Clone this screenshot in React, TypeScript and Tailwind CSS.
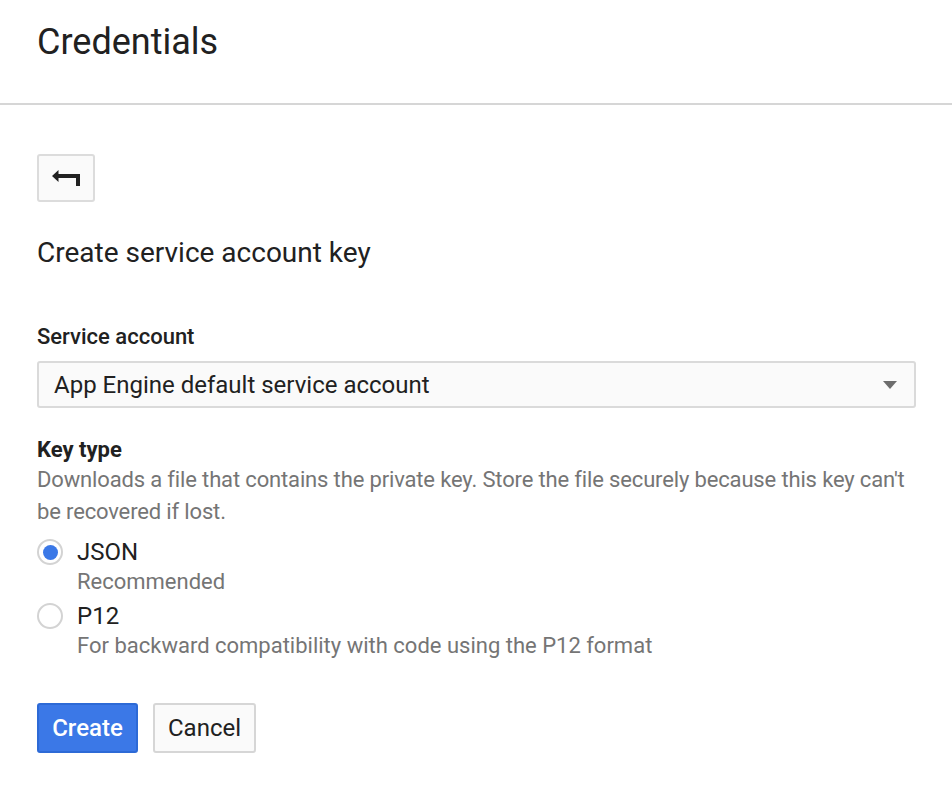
import { useState } from "react";

type KeyType = "json" | "p12";

const keyOptions: { value: KeyType; label: string; hint: string }[] = [
  { value: "json", label: "JSON", hint: "Recommended" },
  { value: "p12", label: "P12", hint: "For backward compatibility with code using the P12 format" },
];

function BackArrow() {
  return (
    <svg width="28" height="16" viewBox="0 0 28 16" fill="#212121" aria-hidden="true">
      <path d="M0 6 L6.5 0 L6.5 4 L28 4 L28 16 L24 16 L24 8 L6.5 8 L6.5 12 Z" />
    </svg>
  );
}

function Radio({ checked }: { checked: boolean }) {
  return (
    <span className="flex h-[26px] w-[26px] shrink-0 items-center justify-center rounded-full border-2 border-[#d3d3d3] bg-white">
      {checked ? <span className="h-[15px] w-[15px] rounded-full bg-[#3b78e7]" /> : null}
    </span>
  );
}

export default function App() {
  const [keyType, setKeyType] = useState<KeyType>("json");

  return (
    <div className="min-h-[796px] bg-white font-['Roboto',sans-serif] text-[#212121]">
      <header className="h-[105px] border-b-2 border-[#d6d6d6] px-[37px] pt-[24px]">
        <h1 className="text-[36px] leading-[36px]">Credentials</h1>
      </header>

      <main className="pl-[37px] pt-[49px]">
        <button
          type="button"
          className="flex h-[48px] w-[58px] items-center justify-center rounded-[3px] border-2 border-[#dcdcdc] bg-[#fafafa]"
          aria-label="Back"
        >
          <BackArrow />
        </button>

        <h2 className="mt-[35px] text-[28px] leading-[32px]">Create service account key</h2>

        <label className="mt-[54px] block text-[22px] font-medium leading-[28px]">
          Service account
        </label>
        <div className="mt-[10px] flex h-[47px] w-[879px] items-center justify-between rounded-[3px] border-2 border-[#dadada] bg-[#fafafa] pl-[15px] pr-[17px]">
          <span className="text-[24px]">App Engine default service account</span>
          <span className="h-0 w-0 border-x-[7px] border-t-[8px] border-x-transparent border-t-[#6d6d6d]" />
        </div>

        <p className="mt-[28px] text-[22px] font-bold leading-[28px]">Key type</p>
        <p className="max-w-[915px] text-[22px] leading-[32px] tracking-[-0.15px] text-[#757575]">
          Downloads a file that contains the private key. Store the file securely because this key can't
          <br />
          be recovered if lost.
        </p>

        <div className="mt-[9px] flex flex-col gap-[4px]">
          {keyOptions.map((option) => (
            <div key={option.value} onClick={() => setKeyType(option.value)} className="cursor-pointer">
              <div className="flex h-[30px] items-center gap-[14px]">
                <Radio checked={keyType === option.value} />
                <span className="text-[24px] leading-[30px]">{option.label}</span>
              </div>
              <p className="pl-[40px] text-[22px] leading-[30px] text-[#757575]">{option.hint}</p>
            </div>
          ))}
        </div>

        <div className="mt-[42px] flex gap-[15px]">
          <button
            type="button"
            className="h-[50px] w-[101px] rounded-[3px] border-2 border-[#2d6ad6] bg-[#3b78e7] text-[24px] font-medium text-white"
          >
            Create
          </button>
          <button
            type="button"
            className="h-[50px] w-[103px] rounded-[3px] border-2 border-[#d6d6d6] bg-[#fafafa] text-[24px] text-[#212121]"
          >
            Cancel
          </button>
        </div>
      </main>
    </div>
  );
}
